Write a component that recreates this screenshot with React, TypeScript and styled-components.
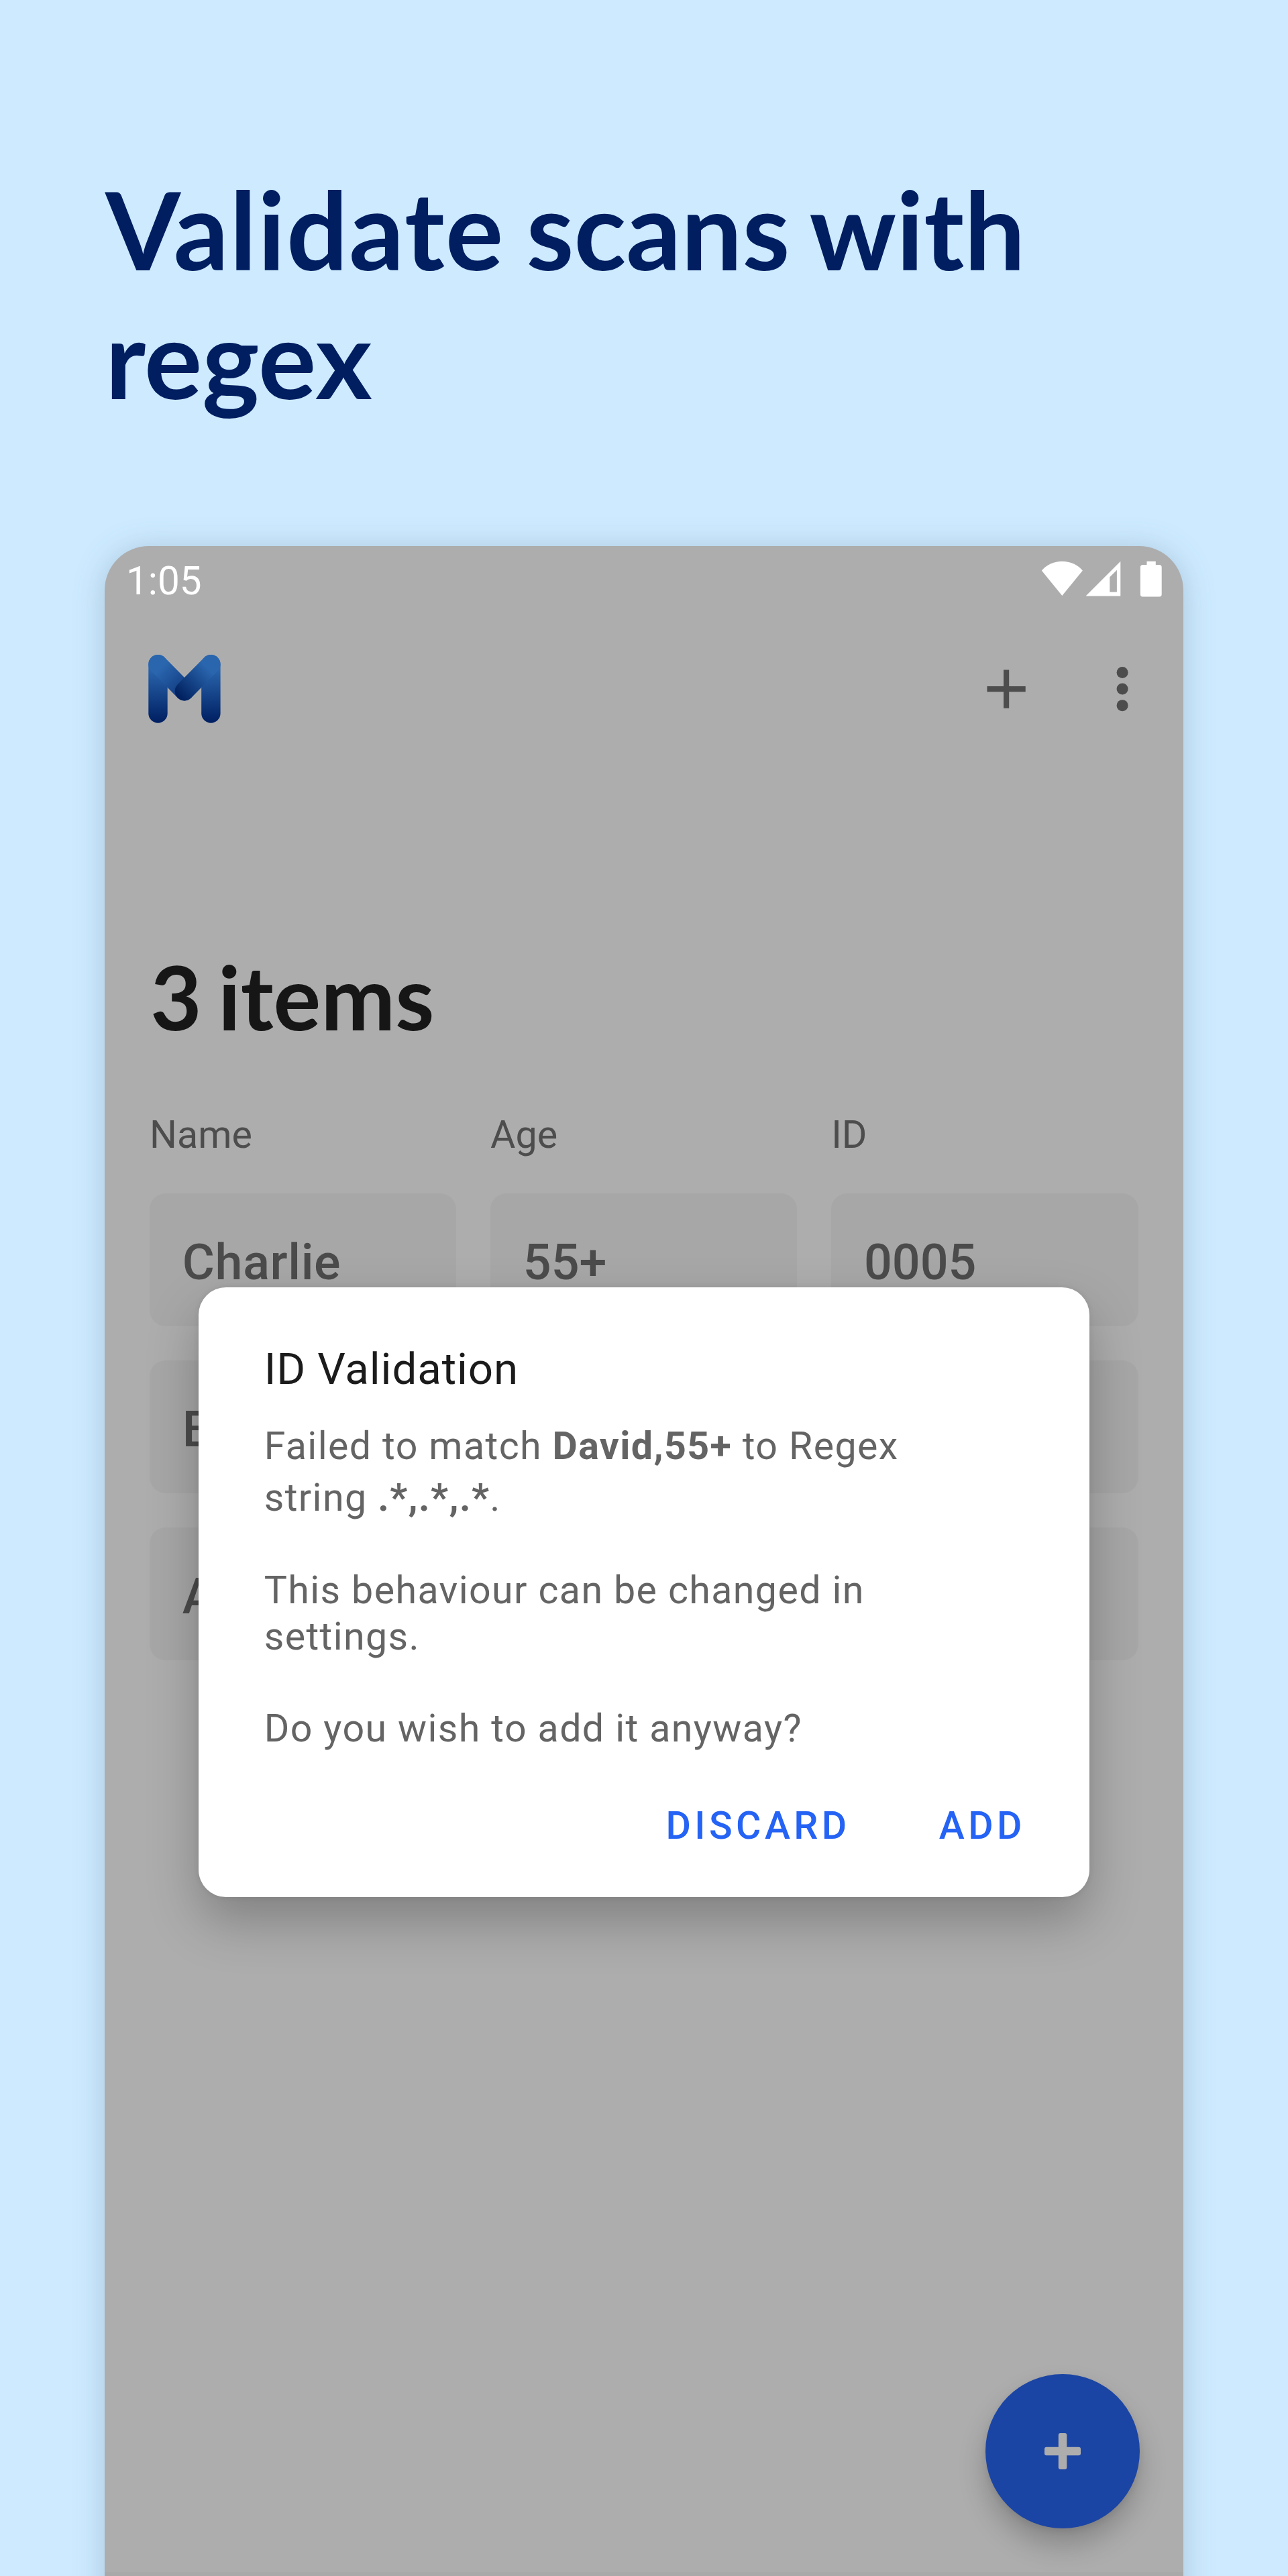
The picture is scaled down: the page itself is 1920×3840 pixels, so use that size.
import React from "react";
import styled, { createGlobalStyle } from "styled-components";

const GlobalStyle = createGlobalStyle`
  * { box-sizing: border-box; }
  html, body { margin: 0; padding: 0; }
  body { background: #cdeaff; }
`;

const Page = styled.main`
  width: 1920px;
  height: 3840px;
  padding: 244.5px 156px 0;
  overflow: hidden;
  background: #cdeaff;
  font-family: Roboto, "Noto Sans", sans-serif;
`;

const Headline = styled.h1`
  margin: 0;
  height: 569.5px;
  padding-left: 1px;
  font: 700 161.6px/192px Lato, sans-serif;
  word-spacing: -7px;
  color: #001e60;
`;

const LooseWord = styled.span`
  letter-spacing: 1.7px;
`;

const Phone = styled.section`
  position: relative;
  display: flex;
  flex-direction: column;
  width: 1607.5px;
  height: 3200px;
  border-radius: 66px;
  background: #adadad;
  box-shadow: 0 4px 44px rgba(100, 130, 150, 0.35);
`;

const StatusBar = styled.div`
  display: flex;
  justify-content: space-between;
  height: 98px;
  padding: 0 32px;
  color: #ffffff;
`;

const Clock = styled.time`
  margin-top: 15px;
  font-size: 58.4px;
  line-height: 74px;
`;

const StatusIcons = styled.svg`
  display: block;
  width: 180px;
  height: 56px;
  margin-top: 21px;
  fill: currentColor;
`;

const Toolbar = styled.header`
  display: flex;
  align-items: center;
  justify-content: space-between;
  height: 230px;
  padding: 0 41.4px 0 63px;
`;

const Logo = styled.svg`
  display: block;
  width: 112px;
  height: 106px;
`;

const Actions = styled.div`
  display: flex;
  gap: 74.5px;
`;

const ActionIcon = styled.svg`
  display: block;
  width: 98.2px;
  height: 98.2px;
  fill: #4d4d4d;
`;

const Content = styled.div`
  padding: 263.7px 67px 0;
`;

const Count = styled.h2`
  margin: 0;
  padding-left: 1px;
  font: 700 132.5px/158px Lato, sans-serif;
  word-spacing: -8px;
  color: #161616;
`;

const Columns = styled.div`
  display: grid;
  grid-template-columns: repeat(3, 1fr);
  gap: 50.7px;
`;

const ColumnHeads = styled(Columns)`
  margin-top: 92.7px;
  margin-bottom: 50.4px;
`;

const ColumnHead = styled.div`
  font-size: 57.4px;
  line-height: 72px;
  color: #4d4d4d;
`;

const Rows = styled.div`
  display: flex;
  flex-direction: column;
  gap: 50.5px;
`;

const Cell = styled.div`
  height: 198.4px;
  padding-left: 48.8px;
  border-radius: 24px;
  background: #a7a7a7;
  font-size: 73.7px;
  font-weight: 500;
  line-height: 206px;
  color: #4b4b4b;

  &:first-child {
    letter-spacing: 0.65px;
  }
`;

const Fab = styled.button`
  position: absolute;
  left: 1313px;
  top: 2725.3px;
  display: grid;
  place-items: center;
  width: 229.5px;
  height: 229.5px;
  padding: 0;
  border: 0;
  border-radius: 50%;
  background: #1b45a4;
  box-shadow: 0 25px 40px rgba(0, 0, 0, 0.22), 0 4px 10px rgba(0, 0, 0, 0.08);
`;

const FabIcon = styled.svg`
  width: 54px;
  height: 54px;
  fill: #adadad;
`;

const NavigationEdge = styled.div`
  position: absolute;
  left: 0;
  right: 0;
  top: 3020px;
  height: 100px;
  background: #a9a9a9;
`;

const Dialog = styled.div`
  position: absolute;
  left: 139.5px;
  top: 1104.7px;
  width: 1328.7px;
  height: 909px;
  padding: 84.3px 95.3px 0 98.2px;
  border-radius: 41px;
  background: #ffffff;
  box-shadow: 0 36px 76px rgba(0, 0, 0, 0.25), 0 0 8px rgba(0, 0, 0, 0.08);
`;

const DialogTitle = styled.h3`
  margin: 0;
  font-size: 65.5px;
  font-weight: 400;
  line-height: 76px;
  letter-spacing: 0.85px;
  color: #1b1b1b;
`;

const Message = styled.p<{ $leading: number; $top: number }>`
  margin: ${(p) => p.$top}px 0 0;
  font-size: 57.3px;
  line-height: ${(p) => p.$leading}px;
  letter-spacing: 1.39px;
  white-space: pre-line;
  color: #646464;
`;

const DialogActions = styled.div`
  display: flex;
  justify-content: flex-end;
  gap: 132px;
  margin-top: 77.1px;
`;

const TextButton = styled.button`
  padding: 0;
  border: 0;
  background: none;
  font: 500 57.3px/68.5px Roboto, sans-serif;
  letter-spacing: 5.45px;
  color: #2563f5;
`;

const heads = ["Name", "Age", "ID"];
const records = [
  ["Charlie", "55+", "0005"],
  ["B", "", ""],
  ["A", "", ""],
];

function BrandLogo() {
  return (
    <Logo viewBox="219 974 112 106" fill="none" strokeWidth="28.4" strokeLinecap="round">
      <defs>
        <linearGradient id="stem" gradientUnits="userSpaceOnUse" x1="0" y1="996" x2="0" y2="1077">
          <stop stopColor="#2a66ae" />
          <stop offset="1" stopColor="#001f62" />
        </linearGradient>
        <linearGradient id="leftArm" gradientUnits="userSpaceOnUse" x1="240" y1="995" x2="284" y2="1039">
          <stop stopColor="#2a66ae" />
          <stop offset="1" stopColor="#0a2f74" />
        </linearGradient>
        <linearGradient id="rightArm" gradientUnits="userSpaceOnUse" x1="309" y1="995" x2="266" y2="1038">
          <stop stopColor="#2a66ae" />
          <stop offset="1" stopColor="#00205f" />
        </linearGradient>
      </defs>
      <path d="M235.5 990.2V1063.5" stroke="url(#stem)" />
      <path d="M314.4 990.2V1063.5" stroke="url(#stem)" />
      <path d="M235.5 990.2L274.9 1030.2" stroke="url(#leftArm)" />
      <path d="M314.4 990.2L274.9 1030.2" stroke="url(#rightArm)" />
    </Logo>
  );
}

export default function App() {
  return (
    <Page>
      <GlobalStyle />
      <Headline>
        <LooseWord>Validate</LooseWord> scans with
        <br />
        regex
      </Headline>
      <Phone>
        <StatusBar>
          <Clock>1:05</Clock>
          <StatusIcons viewBox="1551.5 835 180 56">
            <path d="M1582.8 888L1552.3 850.5A40.7 40.7 0 0 1 1613.4 850.5Z" />
            <path
              fillRule="evenodd"
              d="M1618 888.5L1669.8 836.7V888.5ZM1653.8 860.3V882.5H1664.4V849.7Z"
            />
            <path d="M1709 842V836.7H1722.3V842H1727.5Q1731.2 842 1731.2 845.7V886Q1731.2 889.6 1727.5 889.6H1703Q1699.4 889.6 1699.4 886V845.7Q1699.4 842 1703 842Z" />
          </StatusIcons>
        </StatusBar>
        <Toolbar>
          <BrandLogo />
          <Actions>
            <ActionIcon viewBox="0 0 24 24">
              <path d="M19 13h-6v6h-2v-6H5v-2h6V5h2v6h6v2z" />
            </ActionIcon>
            <ActionIcon viewBox="0 0 24 24">
              <circle cx="12" cy="6" r="2.08" />
              <circle cx="12" cy="12" r="2.08" />
              <circle cx="12" cy="18" r="2.08" />
            </ActionIcon>
          </Actions>
        </Toolbar>
        <Content>
          <Count>3 items</Count>
          <ColumnHeads>
            {heads.map((head) => (
              <ColumnHead key={head}>{head}</ColumnHead>
            ))}
          </ColumnHeads>
          <Rows>
            {records.map((record) => (
              <Columns key={record[0]}>
                {record.map((value, i) => (
                  <Cell key={i}>{value}</Cell>
                ))}
              </Columns>
            ))}
          </Rows>
        </Content>
        <NavigationEdge />
        <Fab aria-label="Add item">
          <FabIcon viewBox="0 0 54 54">
            <rect x="20.8" y="0" width="12.5" height="54" rx="3" />
            <rect x="0" y="20.8" width="54" height="12.5" rx="3" />
          </FabIcon>
        </Fab>
        <Dialog role="dialog">
          <DialogTitle>ID Validation</DialogTitle>
          <Message $leading={76.5} $top={39.5}>
            Failed to match <b>David,55+</b> to Regex{"\n"}string <b>.*,.*,.*</b>.
          </Message>
          <Message $leading={68.5} $top={65.7}>
            This behaviour can be changed in{"\n"}settings.
          </Message>
          <Message $leading={68.5} $top={68.7}>
            Do you wish to add it anyway?
          </Message>
          <DialogActions>
            <TextButton>DISCARD</TextButton>
            <TextButton>ADD</TextButton>
          </DialogActions>
        </Dialog>
      </Phone>
    </Page>
  );
}
